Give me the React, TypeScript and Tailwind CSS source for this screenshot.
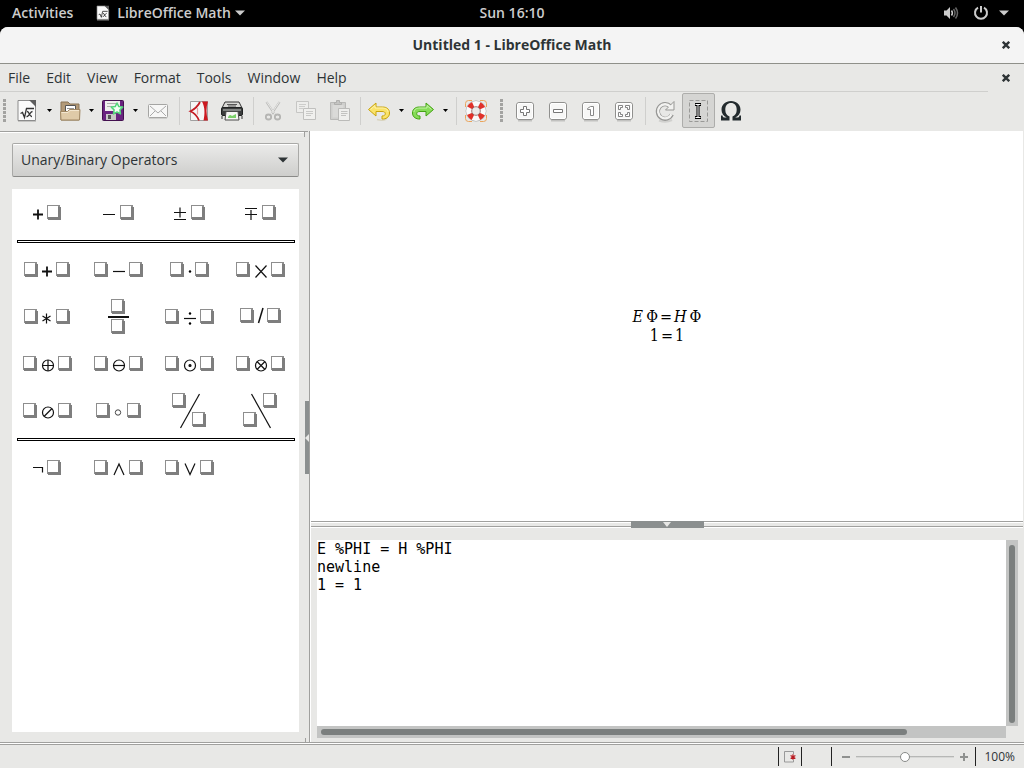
import { useState } from "react";
import type { ReactNode } from "react";

type P = { children?: ReactNode };

/* ---------- small shared pieces ---------- */

function Caret({ className = "" }: { className?: string }) {
  return (
    <svg className={className} width="10" height="6" viewBox="0 0 10 6" fill="currentColor" aria-hidden="true">
      <path d="M0 0.5h10L5 5.5z" />
    </svg>
  );
}

function CloseX() {
  return (
    <svg width="8" height="8" viewBox="0 0 8 8" aria-hidden="true">
      <path d="M0.8 0.8L7.2 7.2M7.2 0.8L0.8 7.2" stroke="#2e3436" strokeWidth="2.4" />
    </svg>
  );
}

/* ---------- toolbar icons ---------- */

function Icon({ children, size = 24 }: P & { size?: number }) {
  return (
    <svg className="shrink-0" width={size} height={size} viewBox="0 0 24 24" fill="none" aria-hidden="true">
      {children}
    </svg>
  );
}

const MathDoc = () => (
  <>
    <path d="M3 1.500h12.500l5 5v15H3z" fill="#fafafa" stroke="#8c8c8c" />
    <path d="M3 22.500h18" stroke="#c4c4c2" />
    <path d="M14 1h7v7z" fill="#5e5e5e" />
    <path d="M5.500 14.500l2-1 2 5 2-9h7.500" stroke="#333" strokeWidth="1.300" />
    <path d="M12 12.500c2.500-.5 2 5.500 5 5M17.500 12.500c-2.500 0-3.500 5.500-6 5" stroke="#333" strokeWidth="1.300" />
  </>
);

const FolderIcon = () => (
  <>
    <path d="M3 3h7l2 2h9v16H3z" fill="#b39a78" stroke="#8a7556" />
    <path d="M7.500 6.500h10v8h-10z" fill="#fff" stroke="#555" />
    <path d="M9 9.500h7" stroke="#999" />
    <path d="M2.500 12.500h7l2-2h10.500l-.5 10.500H3z" fill="#dfcaa8" stroke="#a08763" />
    <path d="M3.500 13.500h6.500l2-2h9" stroke="#f3e6cf" />
  </>
);

const SaveIcon = () => (
  <>
    <rect x="1.500" y="1.500" width="21" height="20" rx="1" fill="#6a2480" stroke="#43104f" />
    <rect x="4" y="2" width="15" height="10" fill="#f0f0ee" />
    <path d="M6 4.500h10M6 7.500h5" stroke="#b0b0ae" />
    <rect x="5" y="15" width="10" height="6" fill="#c9c9c7" />
    <rect x="7" y="16" width="3" height="4" fill="#555" />
    <path
      d="M16 4l1.800 3.600 3.900.5-2.800 2.800.6 4L16 13l-3.500 1.900.6-4-2.800-2.800 3.900-.5z"
      fill="#f4fff6"
      stroke="#54d67b"
      strokeWidth="1.500"
      strokeLinejoin="round"
    />
  </>
);

const MailIcon = () => (
  <>
    <rect x="2.500" y="5.500" width="19" height="13" rx="1" fill="#f7f7f6" stroke="#a5a5a3" />
    <path d="M4 7l8 7 8-7M4 17l5-5M20 17l-5-5" stroke="#aaa" />
    <path d="M3 19.500h18" stroke="#cfcfcd" />
  </>
);

const PdfIcon = () => (
  <>
    <path d="M3.500 2.500h17v19h-17z" fill="#f6f6f6" stroke="#a0a0a0" />
    <path d="M13 3C11 7 8 10 3.500 12.200 7.500 14 10.500 17.500 12 21.500" stroke="#c41c24" strokeWidth="1.800" />
    <path d="M10.500 9v6.500" stroke="#e9a0a2" strokeWidth="1.200" />
    <path d="M15 2.500C18 8 18 15 16.500 21.500H21C19 15 19 8 21 2.500z" fill="#cc1a22" />
  </>
);

const PrintIcon = () => (
  <>
    <path d="M5 3h14l3 6H2z" fill="#d9d9d6" stroke="#333" />
    <path d="M7 5.500h10M8 7h8" stroke="#555" />
    <rect x="1.500" y="8.500" width="21" height="8" rx="1.500" fill="#3b3d3d" stroke="#202222" />
    <path d="M3 11h18" stroke="#9a9c9a" strokeWidth="1.500" />
    <path d="M6 12.500h12l1 8.500H5z" fill="#f6f6f4" stroke="#4a4a4a" />
    <path d="M8 18.500c1-3 2.500-3 4-1.500l4-2v4H8z" fill="#7bd06a" />
    <path d="M2 17v3M22 17v3" stroke="#333" />
  </>
);

const CutIcon = () => (
  <>
    <path d="M5.500 3l8 12M18.500 3l-8 12" stroke="#bdbdbb" strokeWidth="2.200" />
    <path d="M5.800 3l8 12M18.200 3l-8 12" stroke="#e8e8e6" />
    <ellipse cx="7.500" cy="18" rx="2.700" ry="2.500" stroke="#b5b5b3" strokeWidth="1.800" />
    <ellipse cx="16.500" cy="18" rx="2.700" ry="2.500" stroke="#b5b5b3" strokeWidth="1.800" />
  </>
);

const CopyIcon = () => (
  <>
    <path d="M2.500 2.500h12v11h-12z" fill="#ededeb" stroke="#c6c6c4" />
    <path d="M5 5.500h7M5 7.500h6M5 9.500h4" stroke="#cdcdcb" />
    <path d="M9.500 9.500h12v11h-12z" fill="#f0f0ee" stroke="#c0c0be" />
    <path d="M12 12.500h7M12 14.500h7M12 16.500h5" stroke="#c9c9c7" />
  </>
);

const PasteIcon = () => (
  <>
    <path d="M2.500 3.500h15v17h-15z" fill="#cfcfcd" stroke="#b9b9b7" />
    <path d="M4.500 6h11v12.500h-11z" fill="#dadad8" />
    <path d="M6.500 5.500v-2h2v-2h3v2h2v2z" fill="#c4c4c2" stroke="#b0b0ae" />
    <path d="M10.500 9.500h11v12h-11z" fill="#efefed" stroke="#bbbbb9" />
    <path d="M13 12.500h6.500M13 14.500h6.500M13 16.500h5" stroke="#c2c2c0" />
  </>
);

const UndoIcon = () => (
  <>
    <path d="M10 20.500c5 1.500 10 1 10-3" stroke="#d9d4bf" strokeWidth="1.500" />
    <path d="M1.500 10.500L9 4v4h6.500c4.500 0 7 2.300 7 6 0 3-2 5.500-6 6h-1.500v-3c2.500 0 3.300-1.200 3.300-2.300 0-1.500-1.300-2.200-3.300-2.200H9V17z" fill="#fae36a" stroke="#c9a40c" strokeLinejoin="round" />
    <path d="M3.500 10.500L8 6.500V9h7c3.500 0 6 1.500 6 4" stroke="#fff3ac" />
  </>
);

const RedoIcon = () => (
  <>
    <path d="M22.500 10.500L15 4v4H8.500c-4.500 0-7 2.300-7 6 0 3 2 5.500 6 6H9v-3c-2.500 0-3.300-1.200-3.300-2.300 0-1.500 1.300-2.200 3.300-2.200h6V17z" fill="#86dc58" stroke="#45a314" strokeLinejoin="round" />
    <path d="M20.500 10.500L16 6.500V9H9c-3.500 0-6 1.500-6 4" stroke="#c5f3a7" />
  </>
);

const HelpIcon = () => (
  <>
    <path d="M1.500 8V4.500q0-3 3-3H8M16 1.500h3.500q3 0 3 3V8M22.500 16v3.500q0 3-3 3H16M8 22.500H4.500q-3 0-3-3V16" stroke="#eaa55c" />
    <circle cx="12" cy="12" r="7" stroke="#a8a8a8" strokeWidth="6.800" />
    <circle cx="12" cy="12" r="7" stroke="#fafafa" strokeWidth="5.800" />
    <circle cx="12" cy="12" r="7" stroke="#e0312a" strokeWidth="5.800" strokeDasharray="4.800 6.196" strokeDashoffset="-3.098" />
    <circle cx="12" cy="12" r="4.300" stroke="#8a5a58" strokeWidth=".8" fill="#ecebea" />
  </>
);

function ZoomFrame({ children }: P) {
  return (
    <>
      <path d="M5 21.500h14" stroke="#c2c2c0" strokeWidth="2" />
      <rect x="3.500" y="3.500" width="17" height="17" rx="2.500" fill="#f7f7f6" stroke="#90908e" />
      <rect x="4.500" y="4.500" width="15" height="15" rx="1.500" stroke="#fff" />
      {children}
    </>
  );
}

const ZoomInIcon = () => (
  <ZoomFrame>
    <path d="M10.500 7.500h3v3h3v3h-3v3h-3v-3h-3v-3h3z" fill="#fff" stroke="#777" />
  </ZoomFrame>
);
const ZoomOutIcon = () => (
  <ZoomFrame>
    <path d="M7.500 10.500h9v3h-9z" fill="#fff" stroke="#777" />
  </ZoomFrame>
);
const ZoomOneIcon = () => (
  <ZoomFrame>
    <path d="M8.500 9.500l3-2h3v9h-3v-6h-3z" fill="#fff" stroke="#888" />
  </ZoomFrame>
);
const ZoomFitIcon = () => (
  <ZoomFrame>
    <path d="M6.500 10.500v-4h4v2h-2v2zM13.500 6.500h4v4h-2v-2h-2zM6.500 13.500v4h4v-2h-2v-2zM17.500 13.500v4h-4v-2h2v-2z" fill="#fff" stroke="#777" strokeWidth=".9" />
  </ZoomFrame>
);

const RefreshIcon = () => (
  <>
    <path d="M5 21.500q7 2.500 13-.5" stroke="#d0d0ce" strokeWidth="2" />
    <path d="M17.800 15.500a7.300 7.300 0 1 1-1.300-8" stroke="#979795" strokeWidth="4.200" />
    <path d="M20 2.500v8.500h-8.500z" fill="#f2f2f0" stroke="#979795" />
    <path d="M17.500 15.200a7 7 0 1 1-1.200-7.600" stroke="#f2f2f0" strokeWidth="2.400" />
  </>
);

const CursorIcon = () => (
  <>
    <path d="M2.500 1.500h18v21h-18z" stroke="#999997" strokeDasharray="4 2" />
    <path d="M8 5.500h6M11 5v14M8 18.500h6" stroke="#000" strokeWidth="3" />
    <path d="M8.500 5.500h5M11 5v14M8.500 18.500h5" stroke="#fff" />
  </>
);

const OmegaIcon = () => (
  <path
    d="M2 21.500v-5h1.500c.3 1.600.8 2 2.200 2h2.100C4.500 17 2.500 14.300 2.500 10.700 2.500 5.500 6.500 2 12 2s9.500 3.500 9.500 8.700c0 3.600-2 6.300-5.300 7.800h2.100c1.400 0 1.900-.4 2.200-2H22v5h-8.500v-4c2.700-.9 4.200-3.300 4.200-6.800C17.700 6.300 15.500 4 12 4s-5.700 2.300-5.700 6.700c0 3.500 1.500 5.900 4.200 6.800v4z"
    fill="#232b2e"
  />
);

function ToolButton({ label, width, children, active = false, disabled = false }: P & { label: string; width: string; active?: boolean; disabled?: boolean }) {
  return (
    <button
      type="button"
      aria-label={label}
      disabled={disabled}
      className={`flex h-[35px] shrink-0 items-center justify-center ${width} ${active ? "rounded-xs border border-[#adadab] bg-[#d5d5d3]" : ""}`}
    >
      <Icon>{children}</Icon>
    </button>
  );
}

function ArrowButton({ label }: { label: string }) {
  return (
    <button type="button" aria-label={label} className="flex h-[35px] w-3.5 shrink-0 items-center justify-center text-black">
      <svg width="5" height="3" viewBox="0 0 5 3" aria-hidden="true">
        <path d="M0 0h5L2.500 3z" fill="currentColor" />
      </svg>
    </button>
  );
}

function Separator({ width }: { width: string }) {
  return (
    <div className={`flex h-7 shrink-0 justify-center ${width}`}>
      <div className="w-px bg-[#cfcfcd]" />
    </div>
  );
}

function Grip() {
  return (
    <svg className="shrink-0" width="4" height="24" aria-hidden="true">
      {[0, 4, 8, 12, 16, 20].map((y) => (
        <rect key={y} x="0" y={y} width="3" height="3" fill="#a3a3a1" />
      ))}
    </svg>
  );
}

function Toolbar() {
  return (
    <div role="toolbar" aria-label="Standard" className="flex h-[39px] shrink-0 items-center pb-0.5">
      <div className="flex w-3 shrink-0 pl-[3px]"><Grip /></div>
      <ToolButton label="New" width="w-[30px]"><MathDoc /></ToolButton>
      <ArrowButton label="New options" />
      <ToolButton label="Open" width="w-7"><FolderIcon /></ToolButton>
      <ArrowButton label="Open options" />
      <ToolButton label="Save" width="w-[30px]"><SaveIcon /></ToolButton>
      <ArrowButton label="Save options" />
      <ToolButton label="Email" width="w-8"><MailIcon /></ToolButton>
      <Separator width="w-2.5" />
      <ToolButton label="Export as PDF" width="w-[30px]"><PdfIcon /></ToolButton>
      <ToolButton label="Print" width="w-9"><PrintIcon /></ToolButton>
      <Separator width="w-[7px]" />
      <ToolButton label="Cut" width="w-8" disabled><CutIcon /></ToolButton>
      <ToolButton label="Copy" width="w-[34px]" disabled><CopyIcon /></ToolButton>
      <ToolButton label="Paste" width="w-[34px]" disabled><PasteIcon /></ToolButton>
      <Separator width="w-[7px]" />
      <ToolButton label="Undo" width="w-[30px]"><UndoIcon /></ToolButton>
      <ArrowButton label="Undo options" />
      <ToolButton label="Redo" width="w-[30px]"><RedoIcon /></ToolButton>
      <ArrowButton label="Redo options" />
      <Separator width="w-2" />
      <ToolButton label="Help" width="w-8"><HelpIcon /></ToolButton>
      <div className="flex w-4 shrink-0 justify-center pl-1"><Grip /></div>
      <ToolButton label="Zoom in" width="w-[33px]"><ZoomInIcon /></ToolButton>
      <ToolButton label="Zoom out" width="w-[33px]"><ZoomOutIcon /></ToolButton>
      <ToolButton label="Zoom 100%" width="w-[33px]"><ZoomOneIcon /></ToolButton>
      <ToolButton label="Show all" width="w-[33px]"><ZoomFitIcon /></ToolButton>
      <Separator width="w-2.5" />
      <ToolButton label="Update" width="w-8" disabled><RefreshIcon /></ToolButton>
      <ToolButton label="Formula cursor" width="w-[33px]" active><CursorIcon /></ToolButton>
      <ToolButton label="Symbols" width="w-8"><OmegaIcon /></ToolButton>
    </div>
  );
}

/* ---------- operator palette ---------- */

function Box({ x, y = 15 }: { x: number; y?: number }) {
  return (
    <g stroke="none">
      <rect x={x} y={y} width="13" height="14" fill="#8e8e8e" />
      <rect x={x + 1} y={y + 2} width="13" height="13" fill="#7e7e7e" />
      <rect x={x + 1} y={y + 1} width="10" height="11" fill="#fff" />
    </g>
  );
}

const L = ({ d, w = 1.2 }: { d: string; w?: number }) => <path d={d} stroke="#111" strokeWidth={w} fill="none" />;
const Pair = ({ a = 11, b = 46, y = 15 }: { a?: number; b?: number; y?: number }) => (
  <>
    <Box x={a} y={y} />
    <Box x={b} y={y} />
  </>
);
const Ring = ({ children }: P) => (
  <g stroke="#111" strokeWidth="1.200" fill="none">
    <Pair />
    <circle cx="36" cy="24.500" r="5.500" />
    {children}
  </g>
);

type Op = [string, ReactNode];

const unary: Op[] = [
  ["Plus sign", <><L d="M21 24.500h10M26 19.500v10" w={1.8} /><Box x={35} /></>],
  ["Minus sign", <><L d="M20 24.500h12" /><Box x={37} /></>],
  ["Plus minus sign", <><L d="M20 22.500h12M26 17.500v10M20 29.500h12" w={1.2} /><Box x={37} /></>],
  ["Minus plus sign", <><L d="M20 18.500h12M20 24.500h12M26 20v10" w={1.2} /><Box x={37} /></>],
];

const binary: Op[] = [
  ["Addition", <><Pair a={12} b={44} /><L d="M30 24.500h10M35 19.500v10" w={1.8} /></>],
  ["Subtraction", <><Pair /><L d="M30 24.500h12" /></>],
  ["Dot product", <><Pair a={16} b={41} /><circle cx="36" cy="24.500" r="1.200" /></>],
  ["Cross product", <><Pair /><L d="M30.500 18.500l11 12M41.500 18.500l-11 12" /></>],
  ["Asterisk multiplication", <><Pair a={12} b={44} /><L d="M34.500 19.500v10M30.500 22l8 5M38.500 22l-8 5" /></>],
  ["Fraction", <><Box x={28} y={5} /><Box x={28} y={25} /><L d="M25 23h21" w={2} /></>],
  ["Division", <><Pair /><L d="M30 24.500h12" /><circle cx="36" cy="19.500" r="1.200" /><circle cx="36" cy="29.500" r="1.200" /></>],
  ["Slash division", <><Pair a={15} b={42} y={14} /><L d="M38 14l-4.500 15" w={1.5} /></>],
  ["Circled plus", <Ring><path d="M30.500 24.500h11M36 19v11" /></Ring>],
  ["Circled minus", <Ring><path d="M30.500 24.500h11" /></Ring>],
  ["Circled dot", <Ring><circle cx="36" cy="24.500" r="1" fill="#111" /></Ring>],
  ["Circled times", <Ring><path d="M32 20.500l8 8M40 20.500l-8 8" /></Ring>],
  ["Circled slash", <Ring><path d="M40 20.500l-8 8" /></Ring>],
  ["Concatenate", <><Pair a={13} b={44} /><circle cx="35" cy="24.500" r="2.700" fill="none" stroke="#444" /></>],
  ["Wide slash", <><Box x={18} y={5} /><Box x={38} y={24} /><L d="M45.500 6l-19 34" /></>],
  ["Wide backslash", <><Box x={38} y={5} /><Box x={18} y={24} /><L d="M26.500 6l19 34" /></>],
];

const logical: Op[] = [
  ["Boolean not", <><L d="M21 22.500h9.500v5" /><Box x={35} /></>],
  ["Boolean and", <><Pair /><L d="M31 30l5-11 5 11" /></>],
  ["Boolean or", <><Pair /><L d="M31 18.500l5 11 5-11" /></>],
];

function OpGrid({ ops }: { ops: Op[] }) {
  return (
    <div className="grid grid-cols-4 pr-[3px]">
      {ops.map(([name, art]) => (
        <button key={name} type="button" aria-label={name} className="flex h-[47px] justify-center">
          <svg width="71" height="47" viewBox="0 0 71 47" aria-hidden="true">{art}</svg>
        </button>
      ))}
    </div>
  );
}

const Rule = () => (
  <div className="flex h-2.5 flex-col pt-[3px] pr-1 pl-[5px]">
    <div className="h-[3px] border border-black" />
  </div>
);

function Elements() {
  return (
    <aside className="flex w-[310px] shrink-0 border-r border-[#a0a09e]">
      <div className="flex min-w-0 flex-1 flex-col border-t border-[#a0a09e] pr-2.5 pb-2.5 pl-3 shadow-[inset_0_1px_0_#fff]">
        <div className="mt-[11px] mb-3 grid h-[34px] w-[287px] items-center rounded-xs border border-[#a9a9a7] border-b-[#8a8a88] bg-linear-to-b from-[#ebebea] to-[#cececc] text-[#2e3436] shadow-[inset_0_1px_0_#fff]">
          <select aria-label="Element category" className="col-start-1 row-start-1 h-8 appearance-none bg-transparent px-2 text-sm">
            <option>Unary/Binary Operators</option>
            <option>Relations</option>
            <option>Set Operations</option>
            <option>Functions</option>
          </select>
          <Caret className="pointer-events-none col-start-1 row-start-1 mr-2.5 justify-self-end" />
        </div>
        <div className="w-[287px] flex-1 bg-white pt-px">
          <OpGrid ops={unary} />
          <Rule />
          <OpGrid ops={binary} />
          <Rule />
          <OpGrid ops={logical} />
        </div>
      </div>
      <div className="flex w-1 flex-col items-end justify-between">
        <div className="mr-px h-1.5 w-full border-t border-l border-[#a0a09e]" />
        <button type="button" aria-label="Hide elements" className="flex h-[73px] w-1 items-center bg-[#8b8f8f]">
          <svg width="4" height="8" viewBox="0 0 4 8" aria-hidden="true"><path d="M4 0v8L0 4z" fill="#e8e8e6" /></svg>
        </button>
        <div className="h-1 w-full border-l border-[#a0a09e]" />
      </div>
    </aside>
  );
}

/* ---------- page ---------- */

export default function App() {
  const [code, setCode] = useState("E %PHI = H %PHI\nnewline\n1 = 1");
  const [zoom, setZoom] = useState(50);

  return (
    <div className="flex h-screen flex-col bg-black font-['Open_Sans','Noto_Sans',sans-serif] text-sm text-[#2e3436]">
      <header className="grid h-[27px] shrink-0 grid-cols-[1fr_auto_1fr] items-center pb-px font-semibold text-[#ccc]">
        <div className="flex items-center pl-3">
          <button type="button">Activities</button>
          <button type="button" className="ml-[22px] flex items-center">
            <Icon size={16}><MathDoc /></Icon>
            <span className="ml-1.5">LibreOffice Math</span>
            <Caret className="ml-1" />
          </button>
        </div>
        <time>Sun 16:10</time>
        <button type="button" aria-label="System menu" className="mr-[15px] flex items-center justify-self-end">
          <svg width="16" height="16" viewBox="0 0 16 16" fill="none" aria-hidden="true">
            <path d="M1 5.500h2.500L7 2v12l-3.500-3.500H1z" fill="#ccc" />
            <path d="M8.500 5.500q1.800 2.500 0 5" stroke="#ccc" strokeWidth="1.500" />
            <path d="M10.500 4q3 4 0 8M12.500 2.500q4 5.500 0 11" stroke="#666" strokeWidth="1.500" />
          </svg>
          <svg className="ml-3.5" width="16" height="16" viewBox="0 0 16 16" fill="none" aria-hidden="true">
            <path d="M5 2.600a6 6 0 1 0 6 0M8 1v6.500" stroke="#ccc" strokeWidth="2" />
          </svg>
          <Caret className="ml-2.5" />
        </button>
      </header>

      <div className="flex min-h-0 flex-1 flex-col overflow-hidden rounded-t-lg bg-[#e8e8e6]">
        <div className="grid h-9 shrink-0 grid-cols-[1fr_auto_1fr] items-center bg-[#f4f4f4]">
          <h1 className="col-start-2 font-bold">Untitled 1 - LibreOffice Math</h1>
          <button type="button" aria-label="Close window" className="mr-3.5 justify-self-end"><CloseX /></button>
        </div>
        <div className="flex h-[29px] shrink-0 items-center border-t border-[#8f908a] pr-3.5">
          <nav className="flex h-full min-w-0 flex-1 items-center gap-4 border-b border-[#cfcfcd] pl-2">
            {["File", "Edit", "View", "Format", "Tools", "Window", "Help"].map((m) => (
              <button key={m} type="button">{m}</button>
            ))}
          </nav>
          <button type="button" aria-label="Close document" className="ml-3.5"><CloseX /></button>
        </div>
        <Toolbar />

        <div className="flex min-h-0 flex-1">
          <Elements />
          <main className="flex min-w-0 flex-1 flex-col border-l border-white pr-px">
            <section aria-label="Formula" className="flex min-h-0 flex-1 flex-col items-center justify-center bg-white font-['DejaVu_Serif_Condensed','DejaVu_Serif',serif] text-base leading-[19px] text-black">
              <div className="flex"><i className="mr-[3px]">E</i><span>Φ</span><span className="mx-0.5">=</span><i className="mr-[3px]">H</i><span>Φ</span></div>
              <div className="flex"><span>1</span><span className="mx-0.5">=</span><span>1</span></div>
            </section>
            <div className="flex h-2 shrink-0 flex-col">
              <div className="flex h-1.5 justify-center border-y border-[#a0a09e] bg-[#e8e8e6] shadow-[inset_0_1px_0_#fff,0_1px_0_#fff]">
                <button type="button" aria-label="Hide commands" className="-my-px flex h-[7px] w-[73px] shrink-0 justify-center bg-[#8b8f8f] pt-px">
                  <svg width="8" height="5" viewBox="0 0 8 5" aria-hidden="true"><path d="M0 0h8L4 5z" fill="#e8e8e6" /></svg>
                </button>
              </div>
            </div>
            <section aria-label="Commands" className="grid h-[213px] shrink-0 grid-cols-[1fr_12px] grid-rows-[1fr_12px] pt-[11px] pr-[5px] pb-1 pl-1.5">
              <textarea
                aria-label="Formula commands"
                value={code}
                onChange={(e) => setCode(e.target.value)}
                spellCheck={false}
                className="resize-none overflow-hidden bg-white font-['DejaVu_Sans_Mono',monospace] text-[15px] leading-[18px] text-black outline-none"
              />
              <div className="bg-[#c3c4c3] px-[3px] pt-[5px] pb-[3px]"><div className="h-full rounded-full bg-[#7b7f7e]" /></div>
              <div className="bg-[#c3c4c3] px-1 py-[3px]"><div className="h-full w-[86%] rounded-full bg-[#7b7f7e]" /></div>
            </section>
          </main>
        </div>

        <footer className="flex h-[26px] shrink-0 items-center justify-end border-t border-[#a0a09e] pt-0.5 pr-[9px] shadow-[inset_0_1px_0_#fff,inset_0_2px_0_#a0a09e]">
          <div className="flex h-[19px] w-6 items-center justify-center border-x border-[#222]">
            <svg width="12" height="12" viewBox="0 0 12 12" fill="none" aria-label="Document modified" role="img">
              <path d="M9.500 3V.5h-9v10.500h9V9" stroke="#999" />
              <path d="M9 3.300v5.400M6.600 4.600l4.800 2.800M11.400 4.600L6.600 7.400" stroke="#b81c22" strokeWidth="1.200" />
            </svg>
          </div>
          <div className="h-[19px] w-[30px] border-r border-[#222]" />
          <button type="button" aria-label="Zoom out" className="ml-2.5 h-0.5 w-2 bg-[#8f918f]" />
          <input
            type="range"
            aria-label="Zoom"
            value={zoom}
            onChange={(e) => setZoom(Number(e.target.value))}
            className="mx-1.5 h-2.5 w-[98px] appearance-none bg-linear-to-b from-transparent from-40% via-[#a6a7a5] via-40% to-transparent to-60% [&::-webkit-slider-thumb]:size-2.5 [&::-webkit-slider-thumb]:appearance-none [&::-webkit-slider-thumb]:rounded-full [&::-webkit-slider-thumb]:border [&::-webkit-slider-thumb]:border-[#888a88] [&::-webkit-slider-thumb]:bg-white"
          />
          <button type="button" aria-label="Zoom in">
            <svg width="8" height="8" viewBox="0 0 8 8" aria-hidden="true"><path d="M0 4h8M4 0v8" stroke="#8f918f" strokeWidth="2" /></svg>
          </button>
          <div className="ml-[7px] h-[19px] w-px bg-[#222]" />
          <span className="ml-2 text-xs">100%</span>
        </footer>
      </div>
    </div>
  );
}
